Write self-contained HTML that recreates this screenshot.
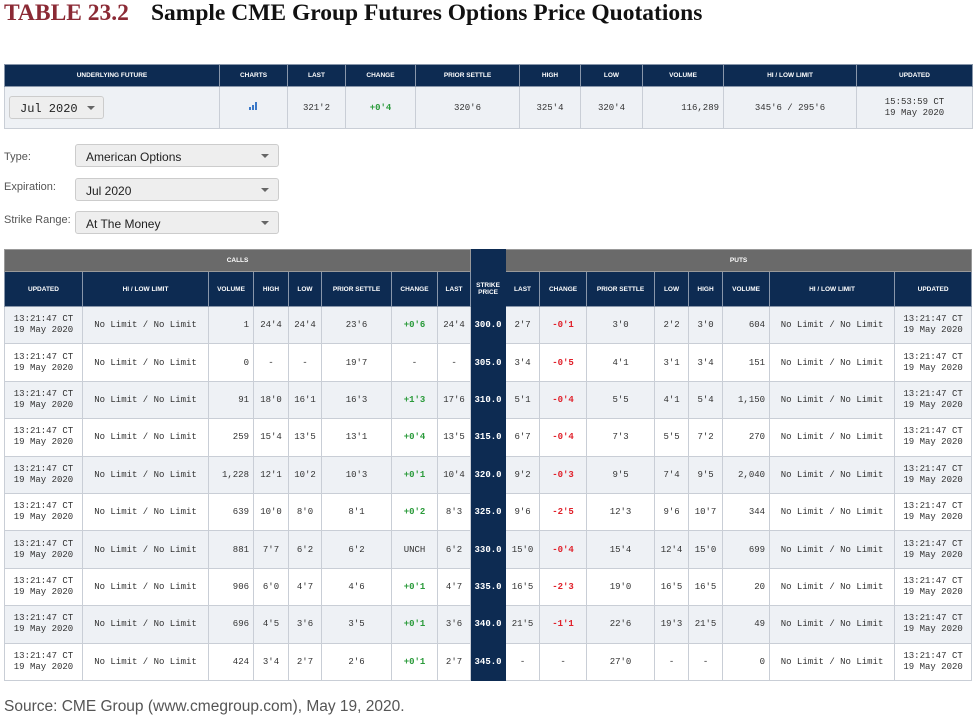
<!DOCTYPE html>
<html><head><meta charset="utf-8"><style>
*{margin:0;padding:0;box-sizing:border-box}
body{width:975px;height:718px;background:#fff;position:relative;overflow:hidden;font-family:"Liberation Sans",sans-serif}
.title{position:absolute;left:4px;top:0px;font-family:"Liberation Serif",serif;font-weight:bold;font-size:23.5px;color:#111;white-space:nowrap}
.title span{color:#8b2a35;margin-right:22px}
table{border-collapse:collapse;table-layout:fixed;position:absolute;left:4px}
td,th{border:1px solid #c9ced6;text-align:center;overflow:hidden;white-space:nowrap}
th{background:#0d2b52;color:#fff;font-size:6.5px;font-weight:bold;border-color:#8896aa}
td{font-family:"Liberation Mono",monospace;font-size:9px;color:#333}
.g{color:#2a9a3a;font-weight:bold}.r{color:#e0202a;font-weight:bold}
.grey th{background:#6a6a6a;border-color:#999}
.sp{background:#0d2b52!important;color:#fff;font-weight:bold;border-color:#0d2b52!important}
.rt{text-align:right;padding-right:4px}
tr.a td{background:#eef1f5}
tr.b td{background:#fff}
.sel{position:absolute;left:75px;width:204px;height:23px;border:1px solid #ccc;border-radius:3px;background:#eee;font-size:12px;color:#222;padding:5px 10px}
.sel:after{content:"";position:absolute;right:9px;top:9px;border:4px solid transparent;border-top:4px solid #666}
.lab{position:absolute;left:4px;font-size:11px;color:#555}
</style></head><body>
<div class="title"><span>TABLE 23.2</span>Sample CME Group Futures Options Price Quotations</div>

<table style="top:64px;width:968px">
<colgroup><col style="width:215px"><col style="width:68px"><col style="width:58px"><col style="width:70px"><col style="width:104px"><col style="width:61px"><col style="width:62px"><col style="width:81px"><col style="width:133px"><col style="width:116px"></colgroup>
<tr style="height:22px"><th>UNDERLYING FUTURE</th><th>CHARTS</th><th>LAST</th><th>CHANGE</th><th>PRIOR SETTLE</th><th>HIGH</th><th>LOW</th><th>VOLUME</th><th>HI / LOW LIMIT</th><th>UPDATED</th></tr>
<tr style="height:42px" class="a"><td style="text-align:left;padding-left:4px"><div style="position:relative;width:95px;height:23px;border:1px solid #ccc;border-radius:3px;background:#eee;font-size:12px;padding:5px 10px;color:#222">Jul 2020<span style="position:absolute;right:8px;top:9px;border:4px solid transparent;border-top:4px solid #666"></span></div></td>
<td><svg width="9" height="8"><rect x="0" y="5" width="2" height="3" fill="#3a78c8"/><rect x="3" y="3" width="2" height="5" fill="#3a78c8"/><rect x="6" y="0" width="2" height="8" fill="#3a78c8"/></svg></td>
<td>321'2</td><td class="g">+0'4</td><td>320'6</td><td>325'4</td><td>320'4</td><td class="rt">116,289</td><td>345'6 / 295'6</td><td style="line-height:11px">15:53:59 CT<br>19 May 2020</td></tr>
</table>

<div class="lab" style="top:151px">Type:</div><div class="sel" style="top:144px">American Options</div>
<div class="lab" style="top:181px">Expiration:</div><div class="sel" style="top:178px">Jul 2020</div>
<div class="lab" style="top:214px">Strike Range:</div><div class="sel" style="top:211px">At The Money</div>

<table style="top:249px;width:968px">
<colgroup><col style="width:78px"><col style="width:126px"><col style="width:45px"><col style="width:35px"><col style="width:33px"><col style="width:70px"><col style="width:46px"><col style="width:33px"><col style="width:35px"><col style="width:34px"><col style="width:47px"><col style="width:68px"><col style="width:34px"><col style="width:34px"><col style="width:47px"><col style="width:125px"><col style="width:77px"></colgroup>
<tr class="grey" style="height:22px"><th colspan="8">CALLS</th><th class="sp"></th><th colspan="8">PUTS</th></tr>
<tr style="height:35px"><th>UPDATED</th><th>HI / LOW LIMIT</th><th>VOLUME</th><th>HIGH</th><th>LOW</th><th>PRIOR SETTLE</th><th>CHANGE</th><th>LAST</th><th class="sp">STRIKE<br>PRICE</th><th>LAST</th><th>CHANGE</th><th>PRIOR SETTLE</th><th>LOW</th><th>HIGH</th><th>VOLUME</th><th>HI / LOW LIMIT</th><th>UPDATED</th></tr>
<tbody id="b"></tbody>
</table>
<script>
var d=[["1","24'4","24'4","23'6","+0'6","24'4","300.0","2'7","-0'1","3'0","2'2","3'0","604"],
["0","-","-","19'7","-","-","305.0","3'4","-0'5","4'1","3'1","3'4","151"],
["91","18'0","16'1","16'3","+1'3","17'6","310.0","5'1","-0'4","5'5","4'1","5'4","1,150"],
["259","15'4","13'5","13'1","+0'4","13'5","315.0","6'7","-0'4","7'3","5'5","7'2","270"],
["1,228","12'1","10'2","10'3","+0'1","10'4","320.0","9'2","-0'3","9'5","7'4","9'5","2,040"],
["639","10'0","8'0","8'1","+0'2","8'3","325.0","9'6","-2'5","12'3","9'6","10'7","344"],
["881","7'7","6'2","6'2","UNCH","6'2","330.0","15'0","-0'4","15'4","12'4","15'0","699"],
["906","6'0","4'7","4'6","+0'1","4'7","335.0","16'5","-2'3","19'0","16'5","16'5","20"],
["696","4'5","3'6","3'5","+0'1","3'6","340.0","21'5","-1'1","22'6","19'3","21'5","49"],
["424","3'4","2'7","2'6","+0'1","2'7","345.0","-","-","27'0","-","-","0"]];
var h="",u='<td style="line-height:11px">13:21:47 CT<br>19 May 2020</td>',l='<td>No Limit / No Limit</td>';
d.forEach(function(r,i){var c1=r[4][0]=="+"?"g":"",c2=r[8][0]=="-"&&r[8].length>1?"r":"";
h+='<tr class="'+(i%2?"b":"a")+'" style="height:37.4px">'+u+l+'<td class="rt">'+r[0]+'</td><td>'+r[1]+'</td><td>'+r[2]+'</td><td>'+r[3]+'</td><td class="'+c1+'">'+r[4]+'</td><td>'+r[5]+'</td><td class="sp">'+r[6]+'</td><td>'+r[7]+'</td><td class="'+c2+'">'+r[8]+'</td><td>'+r[9]+'</td><td>'+r[10]+'</td><td>'+r[11]+'</td><td class="rt">'+r[12]+'</td>'+l+u+'</tr>';});
document.getElementById("b").innerHTML=h;
</script>
<div style="position:absolute;left:4px;top:698px;font-size:15.5px;color:#555">Source: CME Group (www.cmegroup.com), May 19, 2020.</div>
</body></html>
